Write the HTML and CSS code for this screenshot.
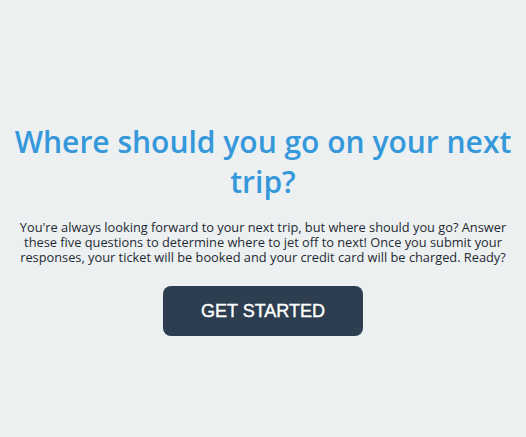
FILE: index.html
```html
<!DOCTYPE html>
<html>
<head>
<meta charset="utf-8">
<link rel="stylesheet" href="styles.css">
</head>
<body>
<main class="intro">
  <h1 class="intro-title">Where should you go on your next trip?</h1>
  <p class="intro-text">You're always looking forward to your next trip, but where should you go? Answer these five questions to determine where to jet off to next! Once you submit your responses, your ticket will be booked and your credit card will be charged. Ready?</p>
  <button class="start-btn">GET STARTED</button>
</main>
</body>
</html>
```
FILE: styles.css
```css
html, body {
  margin: 0;
  padding: 0;
  background: #ecf0f1;
}
.intro {
  display: flex;
  flex-direction: column;
  align-items: center;
  padding: 122px 14px 0;
  text-align: center;
}
.intro-title {
  margin: 0;
  font-family: "Open Sans", sans-serif;
  font-weight: 600;
  font-size: 30px;
  line-height: 40px;
  color: #3498db;
}
.intro-text {
  margin: 18px 0 0;
  font-family: "Open Sans", sans-serif;
  font-size: 12.8px;
  line-height: 15px;
  color: #1f2a33;
}
.start-btn {
  margin-top: 21px;
  width: 200px;
  height: 50px;
  border: none;
  border-radius: 8px;
  background: #2c3e50;
  color: #fff;
  font-family: "Liberation Sans", Arial, sans-serif;
  font-size: 18px;
  -webkit-text-stroke: 0.4px #fff;
}
```
